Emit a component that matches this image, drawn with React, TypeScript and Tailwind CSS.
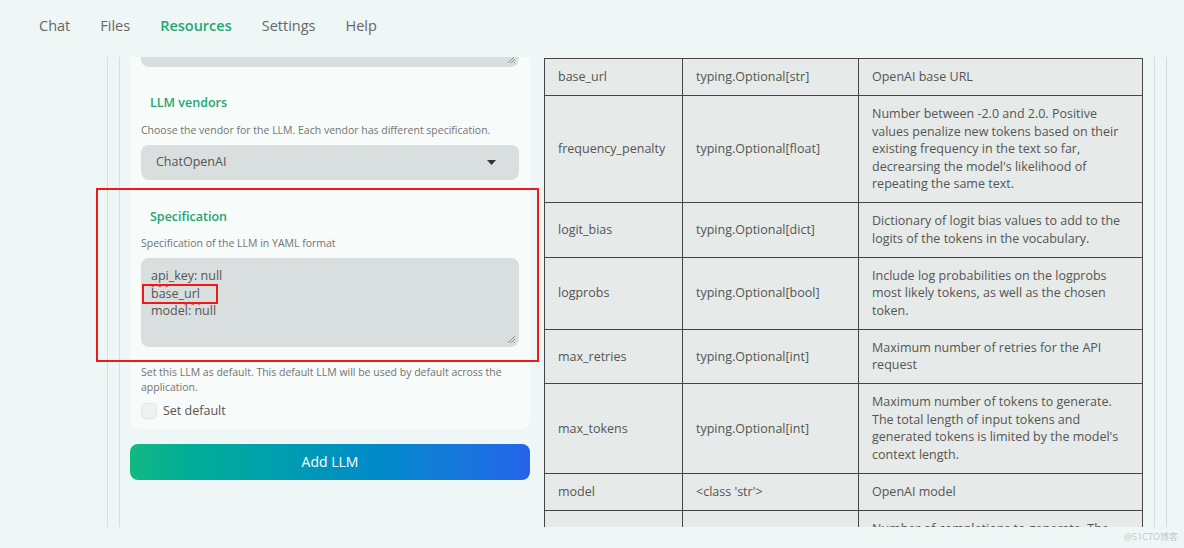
import React from 'react'

const rows: { name: string; type: string; desc: string[] }[] = [
  { name: 'base_url', type: 'typing.Optional[str]', desc: ['OpenAI base URL'] },
  {
    name: 'frequency_penalty',
    type: 'typing.Optional[float]',
    desc: [
      'Number between -2.0 and 2.0. Positive',
      'values penalize new tokens based on their',
      'existing frequency in the text so far,',
      "decrearsing the model's likelihood of",
      'repeating the same text.',
    ],
  },
  {
    name: 'logit_bias',
    type: 'typing.Optional[dict]',
    desc: ['Dictionary of logit bias values to add to the', 'logits of the tokens in the vocabulary.'],
  },
  {
    name: 'logprobs',
    type: 'typing.Optional[bool]',
    desc: [
      'Include log probabilities on the logprobs',
      'most likely tokens, as well as the chosen',
      'token.',
    ],
  },
  {
    name: 'max_retries',
    type: 'typing.Optional[int]',
    desc: ['Maximum number of retries for the API', 'request'],
  },
  {
    name: 'max_tokens',
    type: 'typing.Optional[int]',
    desc: [
      'Maximum number of tokens to generate.',
      'The total length of input tokens and',
      "generated tokens is limited by the model's",
      'context length.',
    ],
  },
  { name: 'model', type: "<class 'str'>", desc: ['OpenAI model'] },
  {
    name: 'n',
    type: "<class 'int'>",
    desc: ['Number of completions to generate. The', 'value must be at least 1.'],
  },
]

function ResizeGrip() {
  return (
    <svg width="9" height="9" viewBox="0 0 9 9" className="absolute bottom-[3px] right-[3px]">
      <path d="M8 1 L1 8 M8 4 L4 8 M8 7 L7 8" stroke="#8a8f8e" strokeWidth="1" />
    </svg>
  )
}

function Squiggle({ children }: { children: React.ReactNode }) {
  return (
    <span className="underline decoration-wavy decoration-[#e53935] decoration-1 underline-offset-[3px]">
      {children}
    </span>
  )
}

const navItems = ['Chat', 'Files', 'Resources', 'Settings', 'Help']

export default function App() {
  return (
    <div
      className="relative h-[548px] w-[1184px] overflow-hidden bg-[#eff7f6] text-[#5f5f5f]"
      style={{ fontFamily: '"Open Sans", "Noto Sans", sans-serif' }}
    >
      <nav className="flex h-[57px] items-center gap-[30px] pb-[5px] pl-[39px] text-[14.5px]">
        {navItems.map((n) =>
          n === 'Resources' ? (
            <span key={n} className="font-semibold text-[#21a874]">
              {n}
            </span>
          ) : (
            <span key={n} className="text-[#666]">
              {n}
            </span>
          ),
        )}
      </nav>

      <div className="ml-[107px] h-[470px] w-[1060px] border-x border-[#d6dddc] px-[11px]">
        <div className="flex h-full gap-[14px] overflow-hidden border-x border-[#d6dddc] pl-[10px] pr-[11px]">
          {/* left form */}
          <div className="flex w-[400px] shrink-0 flex-col">
            <div className="rounded-b-lg bg-[#f7fbfa] px-[11px] pb-[8px]">
              <div className="relative h-[10px] rounded-b-lg bg-[#d9dfde]">
                <ResizeGrip />
              </div>

              <div className="mt-[27px] pl-[9px] text-[12.5px] font-semibold leading-[18px] text-[#1fa673]">
                LLM vendors
              </div>
              <div className="mt-[11px] text-[10.5px] leading-[14px] text-[#737373]">
                Choose the vendor for the LLM. Each vendor has different specification.
              </div>
              <div className="mt-[8px] flex h-[35px] items-center justify-between rounded-lg bg-[#d9dfde] pl-[15px] pr-[23px] text-[12.5px] text-[#555]">
                <span>ChatOpenAI</span>
                <svg width="9" height="5" viewBox="0 0 9 5">
                  <path d="M0 0 H9 L4.5 5 Z" fill="#333" />
                </svg>
              </div>

              <div className="mt-[28px] pl-[9px] text-[12.5px] font-semibold leading-[18px] text-[#1fa673]">
                Specification
              </div>
              <div className="mt-[10px] text-[10.5px] leading-[14px] text-[#737373]">
                Specification of the LLM in YAML format
              </div>
              <div className="relative mt-[8px] h-[89px] rounded-lg bg-[#d9dfde] px-[10px] pt-[9px] text-[12.5px] leading-[17.5px] text-[#555]">
                <div>
                  <Squiggle>api</Squiggle>_key: null
                </div>
                <div>
                  base_<Squiggle>url</Squiggle>
                </div>
                <div>model: null</div>
                <ResizeGrip />
              </div>

              <div className="mt-[18px] text-[10.5px] leading-[15px] text-[#737373]">
                Set this LLM as default. This default LLM will be used by default across the
                <br />
                application.
              </div>
              <div className="mt-[7px] flex items-center gap-[6px]">
                <span className="h-[16px] w-[16px] rounded-[4px] border border-[#e3e8e7] bg-[#eef3f2]" />
                <span className="text-[12.5px] text-[#555]">Set default</span>
              </div>
            </div>

            <button className="mt-[15px] h-[36px] w-[400px] rounded-lg bg-gradient-to-r from-[#12b882] to-[#2563eb] text-[14px] font-medium text-white">
              Add LLM
            </button>
          </div>

          {/* params table */}
          <div className="pt-[1px]">
            <table className="w-[598px] table-fixed border-collapse bg-[#e6eae8] text-[12.5px] leading-[17.5px] text-[#555]">
              <colgroup>
                <col className="w-[138px]" />
                <col className="w-[176px]" />
                <col className="w-[284px]" />
              </colgroup>
              <tbody>
                {rows.map((r) => (
                  <tr key={r.name}>
                    <td className="border border-[#454545] px-[13px] py-[9.25px] align-middle">{r.name}</td>
                    <td className="border border-[#454545] px-[13px] py-[9.25px] align-middle">{r.type}</td>
                    <td className="border border-[#454545] px-[13px] py-[9.25px] align-middle">
                      {r.desc.map((d, i) => (
                        <div key={i} className="whitespace-nowrap">
                          {d}
                        </div>
                      ))}
                    </td>
                  </tr>
                ))}
              </tbody>
            </table>
          </div>
        </div>
      </div>

      {/* annotation boxes */}
      <div className="pointer-events-none absolute left-[96px] top-[188px] h-[174px] w-[443px] border-2 border-[#f01818]" />
      <div className="pointer-events-none absolute left-[142px] top-[284px] h-[20px] w-[76px] border-2 border-[#f01818]" />

      <div
        className="absolute bottom-[5px] right-[6px] text-[9px] text-[#c3c8c7]"
        style={{ fontFamily: '"Open Sans", "Noto Sans CJK SC", sans-serif' }}
      >
        @51CTO博客
      </div>
    </div>
  )
}
